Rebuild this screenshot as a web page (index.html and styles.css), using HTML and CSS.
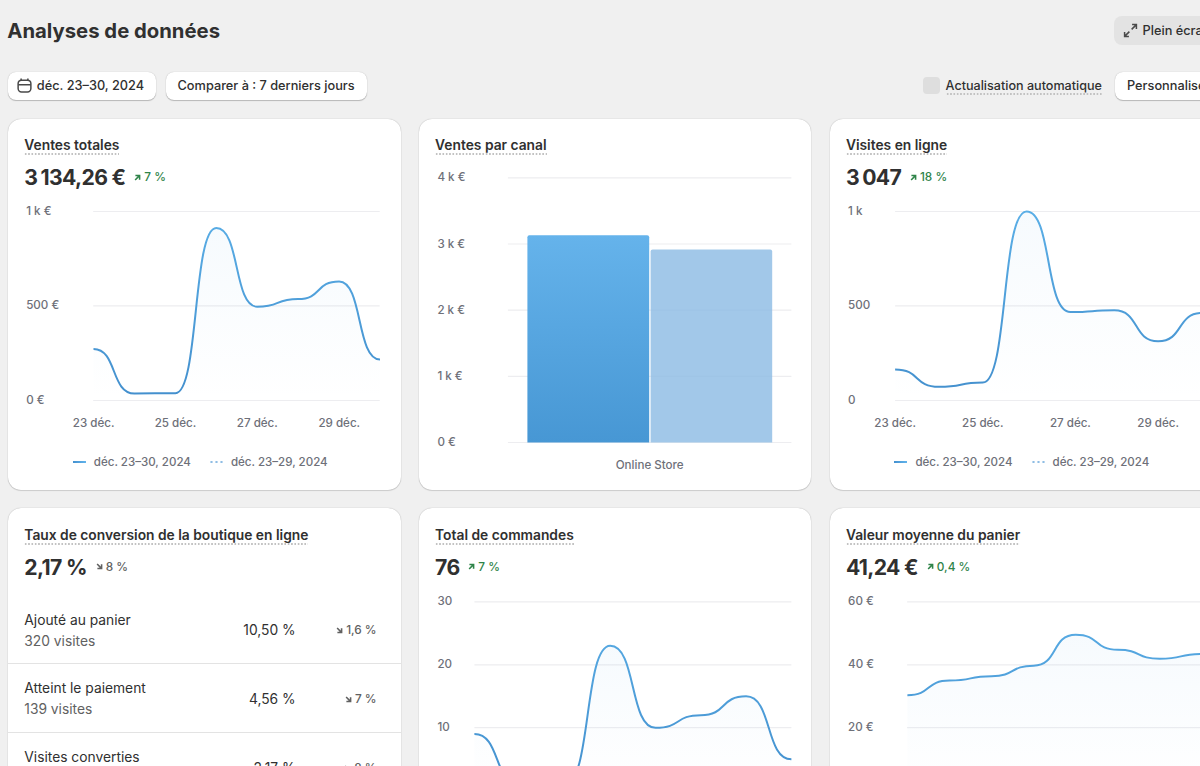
FILE: index.html
```html
<!DOCTYPE html>
<html lang="fr">
<head>
  <meta charset="UTF-8">
  <meta name="viewport" content="width=device-width, initial-scale=1.0">
  <title>Analyses de données</title>
  <link rel="stylesheet" href="styles.css">
</head>
<body>
  <!-- Shared icons and gradients -->
  <svg class="defs" width="0" height="0">
    <defs>
      <linearGradient id="line-top" gradientUnits="userSpaceOnUse" x1="0" y1="211" x2="0" y2="400">
        <stop offset="0" stop-color="#5aaee6"/>
        <stop offset="1" stop-color="#438fcd"/>
      </linearGradient>
      <linearGradient id="line-bottom" gradientUnits="userSpaceOnUse" x1="0" y1="601" x2="0" y2="790">
        <stop offset="0" stop-color="#5aaee6"/>
        <stop offset="1" stop-color="#438fcd"/>
      </linearGradient>
      <linearGradient id="area" x1="0" y1="0" x2="0" y2="1">
        <stop offset="0" stop-color="#4fa3e3" stop-opacity="0.05"/>
        <stop offset="1" stop-color="#4fa3e3" stop-opacity="0"/>
      </linearGradient>
      <linearGradient id="bar" x1="0" y1="0" x2="0" y2="1">
        <stop offset="0" stop-color="#65b3eb"/>
        <stop offset="1" stop-color="#4797d4"/>
      </linearGradient>
      <symbol id="trend-up" viewBox="0 0 8 8">
        <path d="M1.6 1.7H6.4V6.5M6.2 1.9L1.3 6.8" fill="none" stroke="currentColor" stroke-width="1.8"/>
      </symbol>
      <symbol id="trend-down" viewBox="0 0 8 8">
        <path d="M1.6 6.3H6.4V1.5M6.2 6.1L1.3 1.2" fill="none" stroke="currentColor" stroke-width="1.8"/>
      </symbol>
    </defs>
  </svg>

  <main class="page">
    <header class="page-header">
      <h1>Analyses de données</h1>
      <button class="btn btn-muted">
        <svg class="icon" viewBox="0 0 16 16">
          <path d="M9.7 1.7h4.6v4.6M14 2L9.2 6.8M6.3 14.3H1.7V9.7M2 14l4.8-4.8"/>
        </svg>
        Plein écran
      </button>
    </header>

    <div class="controls">
      <button class="btn btn-date">
        <svg class="icon" viewBox="0 0 16 16">
          <rect x="1.2" y="2.3" width="13.6" height="12.5" rx="3.6"/>
          <path d="M1.2 7.2h13.6M4.4 0.6v1.7M11.6 0.6v1.7"/>
        </svg>
        déc. 23–30, 2024
      </button>
      <button class="btn">Comparer à : 7 derniers jours</button>
      <div class="auto-refresh">
        <span class="checkbox"></span>
        <span class="auto-refresh-label dotted">Actualisation automatique</span>
      </div>
      <button class="btn">Personnaliser</button>
    </div>

    <div class="card-grid">
      <section class="card">
        <h2 class="dotted">Ventes totales</h2>
        <div class="metric">
          <span class="metric-value"><span class="thousands">3&#8202;</span>134,26 €</span>
          <span class="trend up"><svg><use href="#trend-up"/></svg>7 %</span>
        </div>
        <svg class="chart" viewBox="8.3 191 392.8 245">
          <path class="grid-line" d="M93.5 211.5H380M93.5 305.8H380M93.5 400.5H380"/>
          <g class="axis">
            <text x="26.5" y="215">1 k €</text>
            <text x="26.5" y="309.5">500 €</text>
            <text x="26.5" y="404">0 €</text>
          </g>
          <g class="axis axis-x">
            <text x="94" y="427">23 déc.</text>
            <text x="175.8" y="427">25 déc.</text>
            <text x="257.6" y="427">27 déc.</text>
            <text x="339.6" y="427">29 déc.</text>
          </g>
          <g class="series" data-base="400" data-points="93.8,349 134.7,393.5 175.7,393.2 216.6,228 257.5,306.8 298.4,299 339.4,281.5 380.3,359.5"></g>
        </svg>
        <div class="legend">
          <span class="legend-item"><i class="swatch"></i>déc. 23–30, 2024</span>
          <span class="legend-item"><i class="swatch-dots"></i>déc. 23–29, 2024</span>
        </div>
      </section>

      <section class="card">
        <h2 class="dotted">Ventes par canal</h2>
        <svg class="chart chart-bars" viewBox="419.1 155 392.8 325">
          <path class="grid-line" d="M508 177.8H791.5M508 244H791.5M508 310.2H791.5M508 376.4H791.5M508 442.5H791.5"/>
          <g class="axis">
            <text x="437.5" y="181.5">4 k €</text>
            <text x="437.5" y="247.8">3 k €</text>
            <text x="437.5" y="314">2 k €</text>
            <text x="437.5" y="380.3">1 k €</text>
            <text x="437.5" y="446.3">0 €</text>
          </g>
          <path fill="url(#bar)" d="M527.5 442.5V237.2a2 2 0 0 1 2-2H647.3a2 2 0 0 1 2 2V442.5Z"/>
          <path class="bar-previous" d="M650.7 442.5V251.5a2 2 0 0 1 2-2H770.3a2 2 0 0 1 2 2V442.5Z"/>
          <g class="axis axis-x">
            <text x="649.8" y="468.6">Online Store</text>
          </g>
        </svg>
      </section>

      <section class="card">
        <h2 class="dotted">Visites en ligne</h2>
        <div class="metric">
          <span class="metric-value"><span class="thousands">3&#8202;</span>047</span>
          <span class="trend up"><svg><use href="#trend-up"/></svg>18 %</span>
        </div>
        <svg class="chart" viewBox="829.9 191 392.8 245">
          <path class="grid-line" d="M895 211.5H1202M895 305.8H1202M895 400.5H1202"/>
          <g class="axis">
            <text x="848" y="215">1 k</text>
            <text x="848" y="309.5">500</text>
            <text x="848" y="404">0</text>
          </g>
          <g class="axis axis-x">
            <text x="895" y="427">23 déc.</text>
            <text x="982.7" y="427">25 déc.</text>
            <text x="1070.3" y="427">27 déc.</text>
            <text x="1158" y="427">29 déc.</text>
          </g>
          <g class="series" data-base="400" data-points="895,369.5 938.8,386.8 982.7,382.6 1026.5,211.5 1070.3,312 1114.2,310.3 1158,341.3 1201.8,313"></g>
        </svg>
        <div class="legend">
          <span class="legend-item"><i class="swatch"></i>déc. 23–30, 2024</span>
          <span class="legend-item"><i class="swatch-dots"></i>déc. 23–29, 2024</span>
        </div>
      </section>

      <section class="card">
        <h2 class="dotted">Taux de conversion de la boutique en ligne</h2>
        <div class="metric">
          <span class="metric-value">2,17 %</span>
          <span class="trend"><svg><use href="#trend-down"/></svg>8 %</span>
        </div>
        <div class="funnel">
          <div class="funnel-row">
            <div class="funnel-step">Ajouté au panier<small>320 visites</small></div>
            <div class="funnel-rate">10,50 %</div>
            <span class="trend"><svg><use href="#trend-down"/></svg>1,6 %</span>
          </div>
          <div class="funnel-row">
            <div class="funnel-step">Atteint le paiement<small>139 visites</small></div>
            <div class="funnel-rate">4,56 %</div>
            <span class="trend"><svg><use href="#trend-down"/></svg>7 %</span>
          </div>
          <div class="funnel-row">
            <div class="funnel-step">Visites converties<small>66 visites</small></div>
            <div class="funnel-rate">2,17 %</div>
            <span class="trend"><svg><use href="#trend-down"/></svg>8 %</span>
          </div>
        </div>
      </section>

      <section class="card">
        <h2 class="dotted">Total de commandes</h2>
        <div class="metric">
          <span class="metric-value">76</span>
          <span class="trend up"><svg><use href="#trend-up"/></svg>7 %</span>
        </div>
        <svg class="chart" viewBox="419.1 581 392.8 245">
          <path class="grid-line" d="M474.5 601.8H791.5M474.5 664.8H791.5M474.5 727.7H791.5"/>
          <g class="axis">
            <text x="437.5" y="605.2">30</text>
            <text x="437.5" y="668.2">20</text>
            <text x="437.5" y="731.2">10</text>
          </g>
          <g class="series low" data-base="790" data-points="474.5,734 519.8,784.3 565.1,784.3 610.3,645.8 655.6,727.8 700.9,715.2 746.2,696.3 791.5,759.3"></g>
        </svg>
      </section>

      <section class="card">
        <h2 class="dotted">Valeur moyenne du panier</h2>
        <div class="metric">
          <span class="metric-value">41,24 €</span>
          <span class="trend up"><svg><use href="#trend-up"/></svg>0,4 %</span>
        </div>
        <svg class="chart" viewBox="829.9 581 392.8 245">
          <path class="grid-line" d="M907 601.8H1202M907 664.8H1202M907 727.7H1202"/>
          <g class="axis">
            <text x="848" y="605.2">60 €</text>
            <text x="848" y="668.2">40 €</text>
            <text x="848" y="731.2">20 €</text>
          </g>
          <g class="series low" data-base="790" data-points="907.3,695.2 949.4,680.5 991.5,676.2 1033.5,665.7 1075.6,634.7 1117.7,649.8 1159.8,658.8 1201.8,654"></g>
        </svg>
      </section>
    </div>
  </main>

  <script src="charts.js"></script>
</body>
</html>
```

FILE: styles.css
```css
:root {
  --bg-color: #f0f0f0;
  --card-bg: #fff;
  --text-color: #303030;
  --secondary-text: #616161;
  --axis-text: #6e7079;
  --success: #2f8449;
  --grid-color: #ededf0;
  --divider: #e3e3e3;
}

* {
  box-sizing: border-box;
}

body {
  margin: 0;
  height: 766px;
  overflow: hidden;
  font-family: Inter, sans-serif;
  background: var(--bg-color);
  color: var(--text-color);
}

.defs {
  display: block;
}

.page {
  width: 1222.4px;
  padding: 16px 0 0 8.3px;
}

.page-header {
  display: flex;
  justify-content: space-between;
  align-items: center;
  height: 29px;
}

h1 {
  margin: 0 0 0 -1px;
  font-size: 20.3px;
  font-weight: 700;
}

/* Buttons */
.btn {
  display: flex;
  align-items: center;
  gap: 5px;
  height: 28px;
  padding: 0 12px;
  border: none;
  border-radius: 8px;
  background: var(--card-bg);
  box-shadow: 0 1px 1px rgba(0, 0, 0, 0.22), 0 0 1px rgba(0, 0, 0, 0.25);
  color: var(--text-color);
  font-family: inherit;
  font-size: 12.75px;
  font-weight: 500;
  white-space: nowrap;
  cursor: pointer;
}

.btn-muted {
  height: 29px;
  padding: 0 12px 0 9px;
  background: #e3e3e3;
  box-shadow: none;
}

.btn-date {
  padding-left: 8.5px;
}

.icon {
  width: 15px;
  height: 15px;
  fill: none;
  stroke: #4a4a4a;
  stroke-width: 1.6;
}

.controls {
  display: flex;
  align-items: center;
  margin-top: 26.5px;
  gap: 9.5px;
}

.auto-refresh {
  display: flex;
  align-items: center;
  gap: 6px;
  margin-left: auto;
  margin-right: 3.5px;
  font-size: 12.6px;
  font-weight: 450;
}

.checkbox {
  width: 17px;
  height: 17px;
  border-radius: 4px;
  background: #dedede;
}

.dotted {
  background: radial-gradient(circle at 50% 50%, #c2c2c2 0.7px, transparent 1.3px) 0 100% / 3.34px 2px repeat-x;
}

.auto-refresh-label {
  line-height: 19px;
}

/* Cards */
.card-grid {
  display: grid;
  grid-template-columns: repeat(3, 392.3px);
  grid-auto-rows: 371.6px;
  gap: 18.4px 18.5px;
  margin-top: 19px;
}

.card {
  padding-top: 17.5px;
  border-radius: 13px;
  background: var(--card-bg);
  box-shadow: 0 1px 1px rgba(0, 0, 0, 0.12), 0 0 1px rgba(0, 0, 0, 0.35);
  overflow: hidden;
}

h2 {
  width: fit-content;
  height: 19px;
  margin: 0 0 0 16px;
  font-size: 13.8px;
  font-weight: 600;
  line-height: 18px;
}

.metric {
  display: flex;
  align-items: center;
  gap: 8.8px;
  height: 28px;
  margin: 8px 0 0 16px;
}

.metric-value {
  font-size: 21.2px;
  font-weight: 650;
  letter-spacing: -0.65px;
}

.thousands {
  margin-right: 2.2px;
}

.trend {
  display: flex;
  align-items: center;
  gap: 3px;
  color: var(--secondary-text);
  font-size: 11.8px;
  font-weight: 550;
}

.trend svg {
  width: 7px;
  height: 7px;
}

.trend.up {
  color: var(--success);
}

/* Charts */
.chart {
  display: block;
  width: 392.8px;
  height: 245px;
}

.chart-bars {
  height: 325px;
}

.grid-line {
  stroke: var(--grid-color);
  stroke-width: 1.2;
}

.axis {
  fill: var(--axis-text);
  font-size: 11.6px;
  font-weight: 450;
}

.axis-x {
  text-anchor: middle;
}

.line {
  fill: none;
  stroke: url(#line-top);
  stroke-width: 2;
}

.low .line {
  stroke: url(#line-bottom);
}

.area {
  fill: url(#area);
}

.bar-previous {
  fill: #8bbae4;
  fill-opacity: 0.8;
}

.legend {
  display: flex;
  gap: 18px;
  margin: 17.5px 0 0 64.5px;
  color: var(--axis-text);
  font-size: 11.55px;
  font-weight: 450;
  line-height: 17px;
}

.legend-item {
  display: flex;
  align-items: center;
  gap: 8px;
}

.swatch {
  width: 13px;
  height: 2px;
  background: linear-gradient(90deg, #4390cf, #62b4ec);
}

.swatch-dots {
  width: 14px;
  height: 2px;
  background: radial-gradient(circle, #8fbde4 0.9px, transparent 1.4px) 0 0 / 5px 2px repeat-x;
}

/* Conversion funnel */
.funnel {
  margin-top: 15px;
}

.funnel-row {
  display: grid;
  grid-template-columns: 1fr 90px 81px;
  align-items: center;
  height: 68.5px;
  padding: 2px 24px 0 16px;
  border-bottom: 1px solid var(--divider);
  font-size: 13.8px;
  line-height: 21px;
}

.funnel-row:last-child {
  border-bottom: none;
}

.funnel-step small {
  display: block;
  color: var(--secondary-text);
  font-size: inherit;
}

.funnel-rate {
  text-align: right;
}

.funnel-row .trend {
  justify-content: flex-end;
}
```

FILE: charts.js
```js
// Draws the area and the smooth line of each series.
const SMOOTHING = 0.58;

function addPath(parent, className, d) {
  const path = document.createElementNS('http://www.w3.org/2000/svg', 'path');
  path.setAttribute('class', className);
  path.setAttribute('d', d);
  parent.appendChild(path);
}

document.querySelectorAll('.series').forEach((series) => {
  const points = series.dataset.points.split(' ').map((pair) => pair.split(',').map(Number));
  let d = `M${points[0]}`;

  for (let i = 1; i < points.length; i++) {
    const [x0, y0] = points[i - 1];
    const [x1, y1] = points[i];
    const offset = (x1 - x0) * SMOOTHING;
    d += `C${x0 + offset},${y0} ${x1 - offset},${y1} ${x1},${y1}`;
  }

  addPath(series, 'area', `${d}V${series.dataset.base}H${points[0][0]}Z`);
  addPath(series, 'line', d);
});
```
